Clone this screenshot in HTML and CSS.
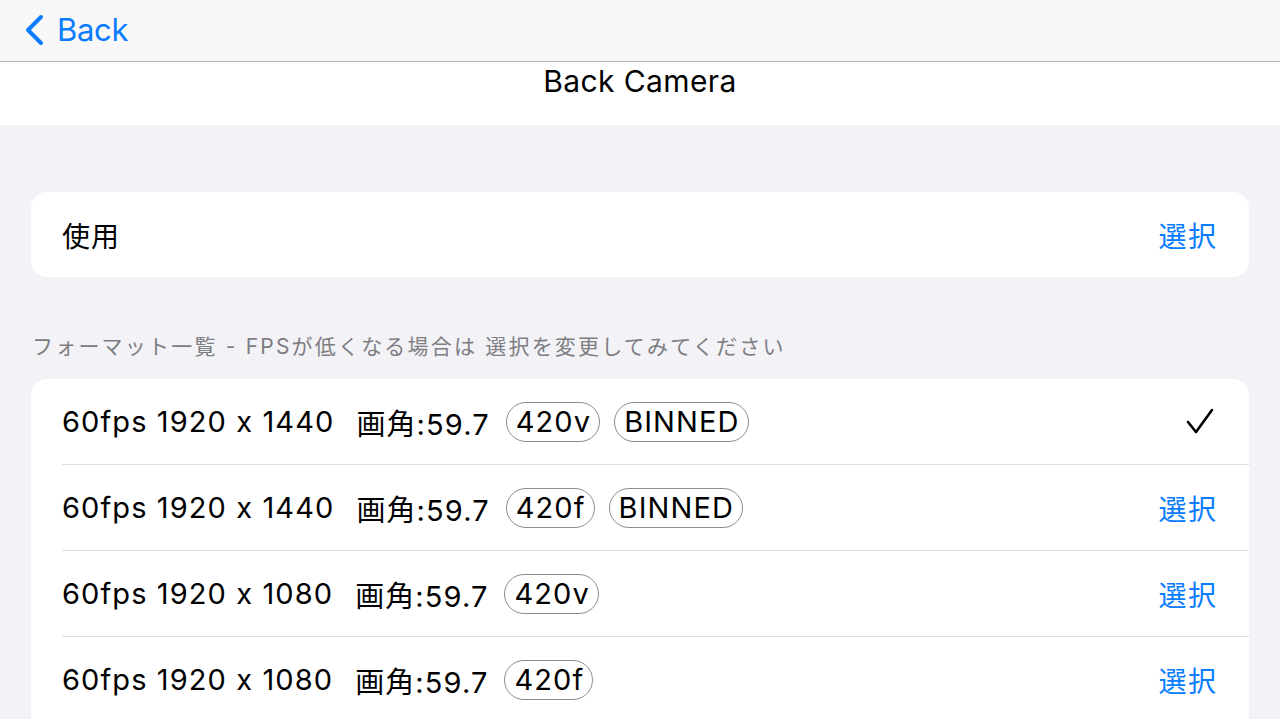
FILE: index.html
```html
<!DOCTYPE html>
<html lang="ja">
<head>
<meta charset="utf-8">
<title>Back Camera</title>
<link rel="stylesheet" href="styles.css">
</head>
<body>
<header class="nav">
  <a class="back" href="#">
    <svg class="chev" width="22" height="32" viewBox="0 0 22 32"><polyline points="17,3 4,16 17,29" fill="none" stroke="#0a7cff" stroke-width="4" stroke-linecap="round" stroke-linejoin="round"/></svg>
    <span>Back</span>
  </a>
</header>
<div class="title-bar"><h1 class="title">Back Camera</h1></div>
<main class="content">
  <section class="card single">
    <div class="row">
      <span class="label">使用</span>
      <span class="action">選択</span>
    </div>
  </section>
  <div class="section-header">フォーマット一覧 - FPSが低くなる場合は 選択を変更してみてください</div>
  <section class="card list">
    <div class="row item">
      <span class="spec">60fps 1920 x 1440</span>
      <span class="fov">画角:59.7</span>
      <span class="pill">420v</span>
      <span class="pill">BINNED</span>
      <span class="spacer"></span>
      <svg class="check" width="30" height="30" viewBox="0 0 30 30"><polyline points="3,15 11,25 27,3" fill="none" stroke="#000" stroke-width="2.6" stroke-linecap="round" stroke-linejoin="round"/></svg>
    </div>
    <div class="row item">
      <span class="spec">60fps 1920 x 1440</span>
      <span class="fov">画角:59.7</span>
      <span class="pill">420f</span>
      <span class="pill">BINNED</span>
      <span class="spacer"></span>
      <span class="action">選択</span>
    </div>
    <div class="row item">
      <span class="spec">60fps 1920 x 1080</span>
      <span class="fov">画角:59.7</span>
      <span class="pill">420v</span>
      <span class="spacer"></span>
      <span class="action">選択</span>
    </div>
    <div class="row item">
      <span class="spec">60fps 1920 x 1080</span>
      <span class="fov">画角:59.7</span>
      <span class="pill">420f</span>
      <span class="spacer"></span>
      <span class="action">選択</span>
    </div>
  </section>
</main>
</body>
</html>
```
FILE: styles.css
```css
* { box-sizing: border-box; }
html, body {
  margin: 0;
  padding: 0;
  height: 719px;
  overflow: hidden;
}
body {
  background: #f2f2f7;
  font-family: "Inter", "Noto Sans CJK JP", sans-serif;
  color: #000;
}
.nav {
  height: 62px;
  background: #f8f8f9;
  border-bottom: 1px solid #b4b4b6;
  display: flex;
  align-items: center;
  padding-left: 24px;
}
.back {
  display: flex;
  align-items: center;
  gap: 11px;
  color: #0a7cff;
  text-decoration: none;
  font-size: 31px;
  letter-spacing: -0.3px;
  margin-top: -2px;
}
.chev { display: block; }
.title-bar {
  background: #fff;
  height: 63px;
  display: flex;
  justify-content: center;
}
.title {
  margin: 0;
  font-weight: 400;
  font-size: 30px;
  line-height: 38px;
  letter-spacing: 0.4px;
}
.content {
  padding: 67px 31px 0;
}
.card {
  background: #fff;
  border-radius: 16px;
}
.single .row {
  height: 85px;
  display: flex;
  align-items: center;
  padding: 0 33px 0 31px;
  font-size: 28px;
}
.label { flex: 1; letter-spacing: 1px; }
.action { color: #0a7cff; font-size: 28px; letter-spacing: 1.5px; margin-right: -1.5px; }
.section-header {
  margin: 53px 0 0 1px;
  height: 49px;
  color: #7d7d82;
  font-size: 21px;
  letter-spacing: 2.2px;
}
.list {
  border-radius: 16px 16px 0 0;
  padding-left: 31px;
}
.item {
  height: 86px;
  display: flex;
  align-items: center;
  border-bottom: 1px solid #dedee0;
  padding-right: 33px;
  font-size: 29px;
  letter-spacing: 1.1px;
}
.spec { margin-right: 22px; }
.fov { margin-right: 16px; }
.pill {
  height: 40px;
  border: 1.5px solid #8d8d90;
  border-radius: 20px;
  padding: 0 8px 0 9px;
  display: flex;
  align-items: center;
  margin-right: 14px;
}
.spacer { flex: 1; }
.check { display: block; margin-right: 1px; }
```
